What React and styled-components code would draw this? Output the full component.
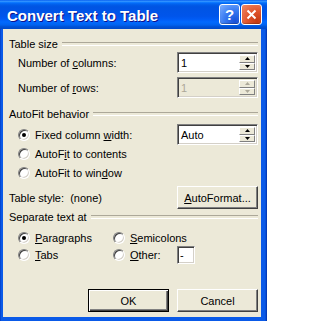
import styled, { createGlobalStyle } from 'styled-components';

const GlobalStyle = createGlobalStyle`
  html, body {
    margin: 0;
    padding: 0;
    background: #fff;
  }
  * {
    box-sizing: border-box;
  }
`;

const Window = styled.div`
  width: 267px;
  height: 321px;
  display: flex;
  flex-direction: column;
  font-family: 'Liberation Sans', Arial, sans-serif;
  font-size: 11px;
  color: #000;
`;

const TitleBar = styled.div`
  height: 29px;
  display: flex;
  align-items: center;
  padding: 0 5px 0 7px;
  background: linear-gradient(
    to bottom,
    #0058ee 0%,
    #3593ff 4%,
    #288eff 6%,
    #127dff 8%,
    #036ffc 10%,
    #0262ee 14%,
    #0057e5 20%,
    #0054e3 24%,
    #0055eb 56%,
    #005bf5 66%,
    #026afe 76%,
    #0062ef 86%,
    #0052d6 92%,
    #0049c8 100%
  );
`;

const Title = styled.div`
  flex: 1;
  color: #fff;
  font-weight: bold;
  font-size: 15px;
  text-shadow: 1px 1px #0f1089;
  margin-top: 1px;
`;

const CaptionButton = styled.div`
  width: 21px;
  height: 21px;
  margin-left: 1px;
  border: 1px solid #fff;
  border-radius: 3px;
  display: flex;
  align-items: center;
  justify-content: center;
  color: #fff;
  font-weight: bold;
  font-size: 15px;
  background: ${(p) =>
    p.$close
      ? 'radial-gradient(circle at 80% 85%, #c53a12 0%, #e0552d 45%, #f08a68 100%)'
      : 'radial-gradient(circle at 80% 85%, #1850d8 0%, #3a7cf2 50%, #7fb0ff 100%)'};
  box-shadow: inset 0 -1px 1px rgba(0, 0, 0, 0.25);
`;

const Frame = styled.div`
  flex: 1;
  display: flex;
  padding: 0 6px 4px 3px;
  background: linear-gradient(to right, #0033b8 0, #0a5ae8 1px, #0a5ae8 calc(100% - 2px), #0030a8 100%);
`;

const Client = styled.div`
  flex: 1;
  display: flex;
  flex-direction: column;
  padding: 8px 3px 5px 6px;
  background: #ece9d8;
`;

const GroupHeader = styled.div`
  height: 14px;
  margin-top: ${(p) => p.$gap || 0}px;
  display: flex;
  align-items: center;
  gap: 4px;

  &::after {
    content: '';
    flex: 1;
    height: 2px;
    border-top: 1px solid #aca899;
    border-bottom: 1px solid #fff;
  }
`;

const FieldRow = styled.div`
  display: grid;
  grid-template-columns: 1fr 81px;
  align-items: center;
  height: ${(p) => p.$height || 21}px;
  margin-top: ${(p) => p.$gap || 0}px;
  padding-left: ${(p) => (p.$flush ? 0 : 9)}px;
`;

const RadioRow = styled.div`
  display: flex;
  align-items: center;
  height: 17px;
  margin-top: ${(p) => p.$gap || 0}px;
  padding-left: 9px;
`;

const Label = styled.label`
  display: flex;
  align-items: center;
  gap: 5px;
  white-space: nowrap;
`;

const Key = styled.span`
  text-decoration: underline;
`;

const RadioDot = styled.span`
  position: relative;
  width: 12px;
  height: 12px;
  flex: none;
  border-radius: 50%;
  border: 1px solid;
  border-color: #808080 #fff #fff #808080;
  box-shadow: inset 1px 1px #404040, inset -1px -1px #d4d0c8;
  background: #fff;

  &::after {
    content: '';
    display: ${(p) => (p.$checked ? 'block' : 'none')};
    position: absolute;
    left: 3px;
    top: 3px;
    width: 4px;
    height: 4px;
    border-radius: 50%;
    background: #000;
  }
`;

const Field = styled.div`
  height: 21px;
  display: flex;
  align-items: stretch;
  border: 1px solid;
  border-color: #808080 #fff #fff #808080;
  box-shadow: inset 1px 1px #404040, inset -1px -1px #d4d0c8;
  padding: 2px;
  background: ${(p) => (p.$disabled ? '#ece9d8' : '#fff')};
  color: ${(p) => (p.$disabled ? '#aca899' : '#000')};
`;

const FieldText = styled.div`
  flex: 1;
  display: flex;
  align-items: center;
  padding-left: 1px;
`;

const SpinColumn = styled.div`
  width: 16px;
  display: flex;
  flex-direction: column;
`;

const SpinButton = styled.div`
  flex: 1;
  display: flex;
  align-items: center;
  justify-content: center;
  background: #ece9d8;
  border: 1px solid;
  border-color: #fff #808080 #808080 #fff;
`;

const Arrow = ({ down, disabled }) => (
  <svg width="5" height="3" viewBox="0 0 5 3">
    <polygon
      points={down ? '0,0 5,0 2.5,3' : '0,3 5,3 2.5,0'}
      fill={disabled ? '#aca899' : '#000'}
    />
  </svg>
);

const SpinBox = ({ value, disabled }) => (
  <Field $disabled={disabled}>
    <FieldText>{value}</FieldText>
    <SpinColumn>
      <SpinButton>
        <Arrow disabled={disabled} />
      </SpinButton>
      <SpinButton>
        <Arrow down disabled={disabled} />
      </SpinButton>
    </SpinColumn>
  </Field>
);

const Button = styled.div`
  width: 81px;
  height: 23px;
  display: flex;
  align-items: center;
  justify-content: center;
  background: #ece9d8;
  border: 1px solid;
  border-color: ${(p) => (p.$default ? '#000' : '#fff #404040 #404040 #fff')};
  box-shadow: ${(p) =>
    p.$default
      ? 'inset 1px 1px #fff, inset -1px -1px #404040, inset -2px -2px #808080'
      : 'inset -1px -1px #808080'};
`;

const Options = styled.div`
  display: grid;
  grid-template-columns: 95px 64px 18px;
  grid-template-rows: 16px 18px;
  align-items: center;
  margin-top: 6px;
  padding-left: 9px;
`;

const SmallInput = styled.div`
  width: 18px;
  height: 18px;
  display: flex;
  align-items: center;
  padding-left: 2px;
  border: 1px solid;
  border-color: #808080 #fff #fff #808080;
  box-shadow: inset 1px 1px #404040, inset -1px -1px #d4d0c8;
  background: #fff;
`;

const ButtonRow = styled.div`
  display: flex;
  justify-content: flex-end;
  gap: 8px;
  margin-top: 25px;
`;

const Radio = ({ checked, children }) => (
  <Label>
    <RadioDot $checked={checked} />
    <span>{children}</span>
  </Label>
);

export default function App() {
  return (
    <>
      <GlobalStyle />
      <Window>
        <TitleBar>
          <Title>Convert Text to Table</Title>
          <CaptionButton>?</CaptionButton>
          <CaptionButton $close>
            <svg width="11" height="11" viewBox="0 0 11 11">
              <path d="M1.5 1.5 L9.5 9.5 M9.5 1.5 L1.5 9.5" stroke="#fff" strokeWidth="2" />
            </svg>
          </CaptionButton>
        </TitleBar>
        <Frame>
          <Client>
            <GroupHeader>Table size</GroupHeader>
            <FieldRow $gap={1}>
              <span>
                Number of <Key>c</Key>olumns:
              </span>
              <SpinBox value="1" />
            </FieldRow>
            <FieldRow $gap={4}>
              <span>
                Number of <Key>r</Key>ows:
              </span>
              <SpinBox value="1" disabled />
            </FieldRow>

            <GroupHeader $gap={9}>AutoFit behavior</GroupHeader>
            <FieldRow $gap={3}>
              <Radio checked>
                Fixed column <Key>w</Key>idth:
              </Radio>
              <SpinBox value="Auto" />
            </FieldRow>
            <RadioRow>
              <Radio>
                AutoF<Key>i</Key>t to contents
              </Radio>
            </RadioRow>
            <RadioRow $gap={2}>
              <Radio>
                AutoFit to win<Key>d</Key>ow
              </Radio>
            </RadioRow>

            <FieldRow $gap={5} $height={23} $flush>
              <span>Table style:&nbsp; (none)</span>
              <Button>
                <span>
                  <Key>A</Key>utoFormat...
                </span>
              </Button>
            </FieldRow>

            <GroupHeader $gap={1}>Separate text at</GroupHeader>
            <Options>
              <Radio checked>
                <Key>P</Key>aragraphs
              </Radio>
              <Radio>
                <Key>S</Key>emicolons
              </Radio>
              <span />
              <Radio>
                <Key>T</Key>abs
              </Radio>
              <Radio>
                <Key>O</Key>ther:
              </Radio>
              <SmallInput>-</SmallInput>
            </Options>

            <ButtonRow>
              <Button $default>OK</Button>
              <Button>Cancel</Button>
            </ButtonRow>
          </Client>
        </Frame>
      </Window>
    </>
  );
}
